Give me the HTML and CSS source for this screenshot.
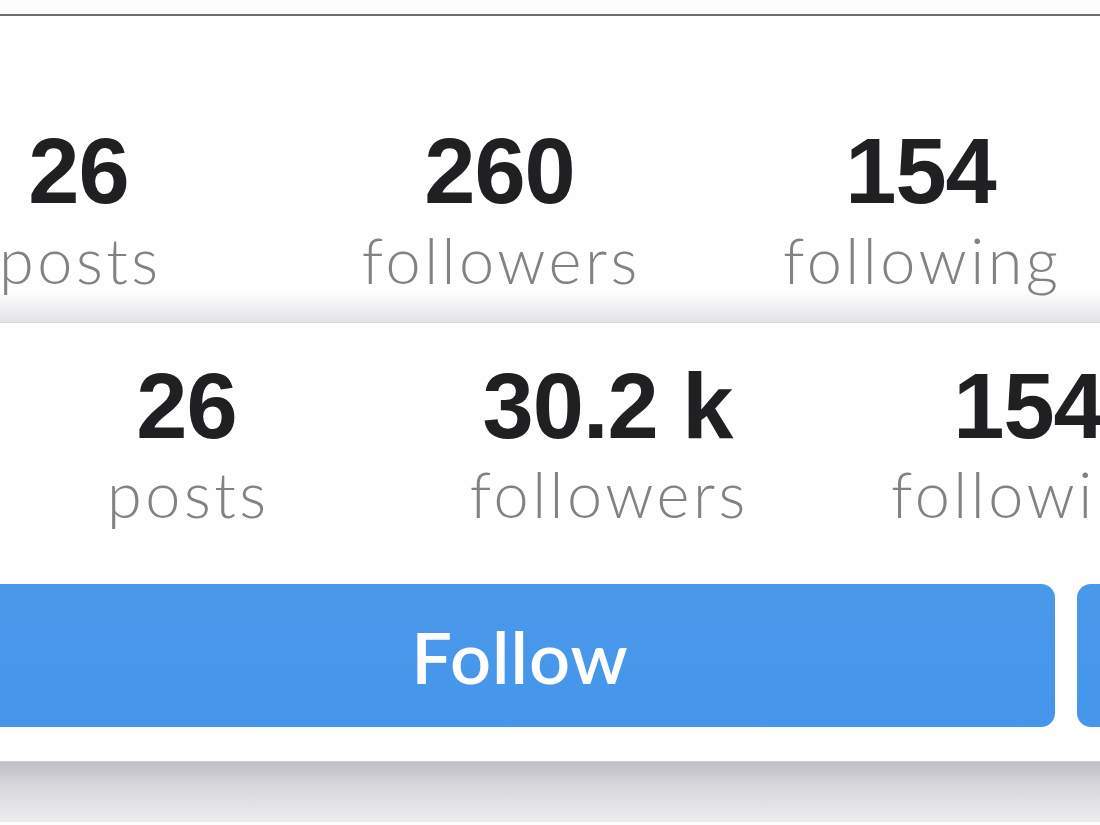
FILE: index.html
```html
<!DOCTYPE html>
<html lang="en">

<head>
    <meta charset="UTF-8">
    <meta name="viewport" content="width=device-width, initial-scale=1.0">
    <title>Profile Stats</title>
    <link rel="stylesheet" href="styles.css">
</head>

<body>
    <div class="top-bar"></div>

    <!-- Old profile header -->
    <section class="card card-old">
        <ul class="stats">
            <li class="stat"><span class="stat-num">26</span><span class="stat-label">posts</span></li>
            <li class="stat"><span class="stat-num">260</span><span class="stat-label">followers</span></li>
            <li class="stat"><span class="stat-num">154</span><span class="stat-label">following</span></li>
        </ul>
        <div class="shade"></div>
    </section>

    <!-- New profile header -->
    <section class="card card-new">
        <ul class="stats">
            <li class="stat"><span class="stat-num">26</span><span class="stat-label">posts</span></li>
            <li class="stat"><span class="stat-num">30.2 k</span><span class="stat-label">followers</span></li>
            <li class="stat"><span class="stat-num">154</span><span class="stat-label">following</span></li>
        </ul>
        <div class="actions">
            <button class="follow-button">Follow</button>
            <button class="more-button"></button>
        </div>
    </section>

    <div class="bottom-shade"></div>
</body>

</html>
```

FILE: styles.css
```css
body {
    margin: 0;
    padding: 0;
    background-color: #fdfdfd;
    overflow: hidden;
    height: 825px;
}

.top-bar {
    height: 14px;
    border-bottom: 2px solid #6f6f6f;
}

.card {
    background-color: #fefefe;
    overflow: hidden;
}

.stats {
    list-style: none;
    margin: 0;
    padding: 0;
    display: flex;
}

.stat {
    flex: 0 0 421px;
    display: flex;
    flex-direction: column;
    align-items: center;
    gap: 11px;
}

.stat-num {
    font-family: 'Liberation Sans', Arial, sans-serif;
    font-weight: bold;
    font-size: 92px;
    line-height: 1;
    color: #202022;
    letter-spacing: -1px;
    white-space: nowrap;
}

.stat-label {
    font-family: 'Lato', sans-serif;
    font-weight: 300;
    font-size: 63px;
    line-height: 1;
    color: #828282;
    letter-spacing: 3.5px;
    padding-left: 3.5px;
    white-space: nowrap;
}

.card-old .stats {
    margin-left: -132px;
    padding-top: 109px;
}

.shade {
    height: 31px;
    background: linear-gradient(#fefefe, #e3e3e6);
    border-bottom: 1px solid #d8d8da;
}

.card-new .stats {
    margin-left: -24px;
    padding-top: 37px;
}

.card-new .stat {
    gap: 10px;
}

.actions {
    display: flex;
    gap: 22px;
    margin: 59px 0 34px -15px;
}

.follow-button,
.more-button {
    height: 143px;
    border: none;
    border-radius: 14px;
    background: linear-gradient(#4a98e9, #4596ec);
    color: white;
    padding: 0;
}

.follow-button {
    flex: 0 0 1070px;
    font-family: 'Lato', sans-serif;
    font-weight: 600;
    font-size: 72px;
    letter-spacing: 1px;
}

.more-button {
    flex: 0 0 200px;
}

.bottom-shade {
    height: 60px;
    background: linear-gradient(#bfbdc7, #d8d8db 40%, #ededef);
    border-top: 1px solid #d0d0d4;
}
```
